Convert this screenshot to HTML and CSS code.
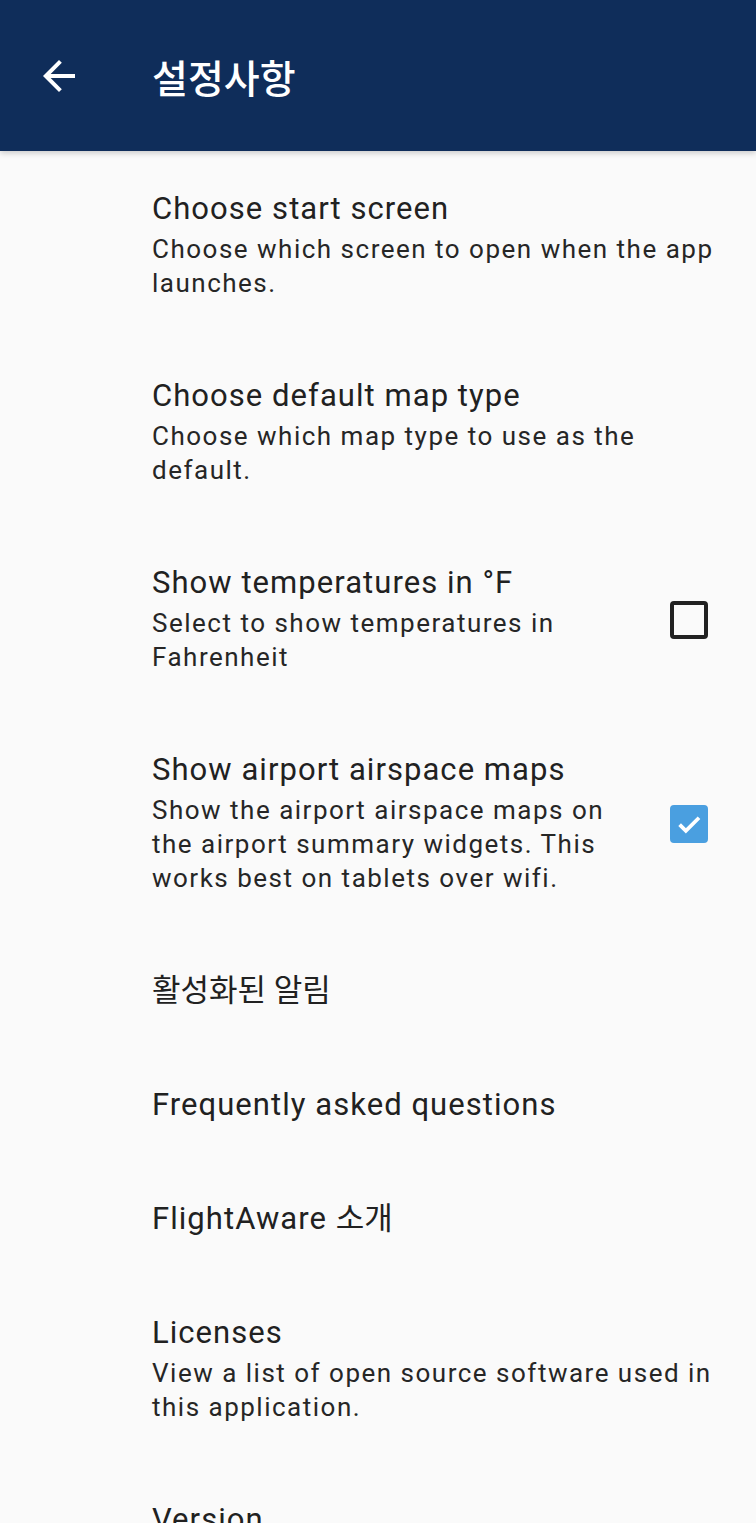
FILE: index.html
```html
<!DOCTYPE html>
<html lang="ko">
<head>
  <meta charset="UTF-8">
  <title>설정사항</title>
  <meta name="viewport" content="width=device-width, initial-scale=1.0">
  <link rel="stylesheet" href="styles.css">
</head>
<body>
  <header class="barra">
    <svg class="atras" viewBox="0 0 24 24" width="48" height="48">
      <path fill="#fff" d="M20 11H7.83l5.59-5.59L12 4l-8 8 8 8 1.41-1.41L7.83 13H20v-2z"/>
    </svg>
    <h1 class="titulo">설정사항</h1>
  </header>

  <main class="lista">
    <div class="item">
      <div class="textos">
        <div class="nombre">Choose start screen</div>
        <div class="resumen">Choose which screen to open when the app launches.</div>
      </div>
    </div>

    <div class="item">
      <div class="textos">
        <div class="nombre">Choose default map type</div>
        <div class="resumen">Choose which map type to use as the default.</div>
      </div>
    </div>

    <div class="item">
      <div class="textos con-caja">
        <div class="nombre">Show temperatures in °F</div>
        <div class="resumen">Select to show temperatures in Fahrenheit</div>
      </div>
      <span class="caja"></span>
    </div>

    <div class="item">
      <div class="textos con-caja">
        <div class="nombre">Show airport airspace maps</div>
        <div class="resumen">Show the airport airspace maps on the airport summary widgets. This works best on tablets over wifi.</div>
      </div>
      <span class="caja marcada">
        <svg viewBox="0 0 24 24" width="36" height="36">
          <path fill="none" stroke="#fff" stroke-width="3" d="M4.5 12.5l5 5L20 7"/>
        </svg>
      </span>
    </div>

    <div class="item">
      <div class="textos">
        <div class="nombre"><span class="ko">활성화된 알림</span></div>
      </div>
    </div>

    <div class="item">
      <div class="textos">
        <div class="nombre">Frequently asked questions</div>
      </div>
    </div>

    <div class="item">
      <div class="textos">
        <div class="nombre">FlightAware <span class="ko">소개</span></div>
      </div>
    </div>

    <div class="item">
      <div class="textos">
        <div class="nombre">Licenses</div>
        <div class="resumen">View a list of open source software used in this application.</div>
      </div>
    </div>

    <div class="item">
      <div class="textos">
        <div class="nombre">Version</div>
        <div class="resumen">&nbsp;</div>
      </div>
    </div>
  </main>
</body>
</html>
```

FILE: styles.css
```css
body {
  margin: 0;
  background-color: #fafafa;
  font-family: Roboto, "Noto Sans CJK KR", sans-serif;
  color: #212121;
  height: 1523px;
  overflow: hidden;
}
.barra {
  height: 151px;
  background-color: #0f2d5a;
  display: flex;
  align-items: center;
  box-shadow: 0 2px 6px rgba(0, 0, 0, 0.2);
  position: relative;
}
.atras {
  margin-left: 35px;
  margin-right: 69px;
}
.titulo {
  margin: 0;
  color: #fff;
  font-family: "Noto Sans CJK KR", sans-serif;
  font-size: 39px;
  font-weight: 500;
}
.lista {
  padding-left: 152px;
}
.item {
  display: flex;
  align-items: center;
  padding: 40px 40px 38px 0;
}
.textos {
  flex: 1;
}
.textos.con-caja {
  padding-right: 40px;
}
.nombre {
  font-size: 31px;
  line-height: 36px;
  letter-spacing: 1.05px;
}
.resumen {
  font-size: 26px;
  line-height: 34px;
  margin-top: 5px;
  color: #262626;
  letter-spacing: 1.5px;
}
.ko {
  letter-spacing: 0;
}
.caja {
  width: 30px;
  height: 30px;
  border: 4px solid #212121;
  border-radius: 4px;
  margin-right: 8px;
  flex-shrink: 0;
  display: flex;
  align-items: center;
  justify-content: center;
}
.caja.marcada {
  border-color: #4a9fe0;
  background-color: #4a9fe0;
}
```
